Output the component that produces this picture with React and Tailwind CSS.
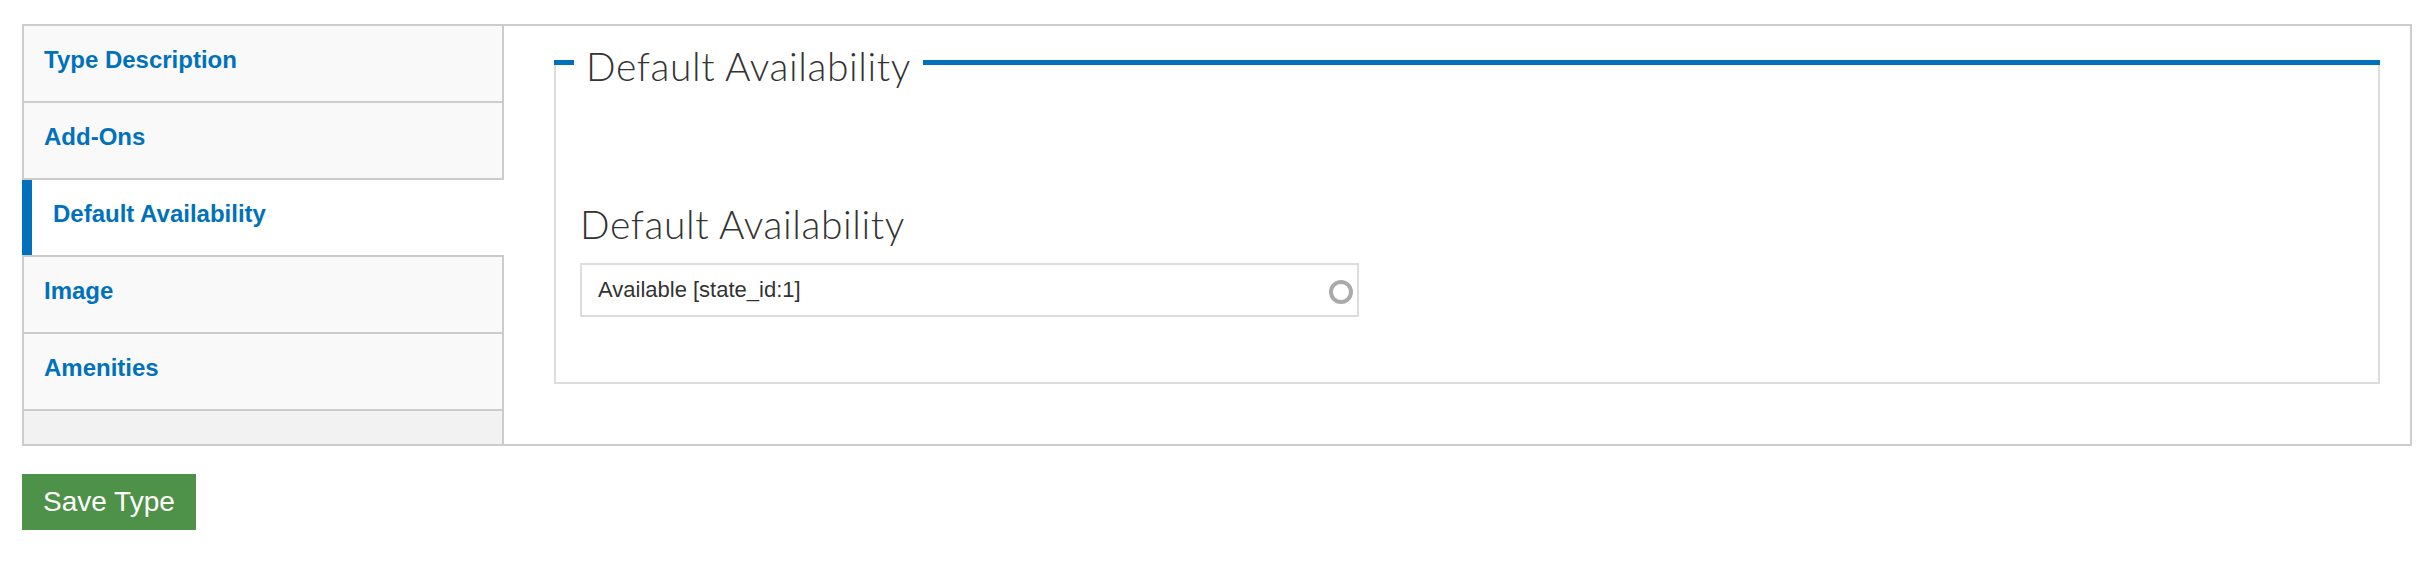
const tabs = [
  { label: "Type Description" },
  { label: "Add-Ons" },
  { label: "Default Availability", active: true },
  { label: "Image" },
  { label: "Amenities" },
];

export default function App() {
  return (
    <div className="min-h-screen bg-white pl-[22px] pr-[24px] pt-[24px] font-['Liberation_Sans',Arial,sans-serif]">
      <div className="flex border-2 border-[#ccc]">
        {/* Sidebar tabs */}
        <div className="w-[480px] shrink-0 flex flex-col">
          {tabs.map((tab) =>
            tab.active ? (
              <div key={tab.label} className="h-[77px] -ml-[2px] flex border-b-2 border-[#ccc]">
                <div className="w-[10px] bg-[#0271bb]" />
                <div className="flex-1 flex items-center bg-white pl-[21px] pb-[7px] text-[24px] font-bold text-[#0271bb]">
                  {tab.label}
                </div>
              </div>
            ) : (
              <div
                key={tab.label}
                className="h-[77px] flex items-center bg-[#f9f9f9] border-b-2 border-r-2 border-[#ccc] pl-[20px] pb-[7px] text-[24px] font-bold text-[#0271bb]"
              >
                {tab.label}
              </div>
            )
          )}
          <div className="flex-1 bg-[#f2f2f2] border-r-2 border-[#ccc]" />
        </div>

        {/* Content */}
        <div className="flex-1 pl-[50px] pr-[30px] pt-[34px] pb-[60px]">
          <div className="flex items-center h-[5px]">
            <div className="w-[20px] h-[5px] bg-[#0271bb]" />
            <span className="px-[12px] pt-[6px] leading-[0] text-[39px] tracking-[0.6px] font-light text-[#333] font-['Lato',sans-serif] whitespace-nowrap">
              Default Availability
            </span>
            <div className="flex-1 h-[5px] bg-[#0271bb]" />
          </div>
          <div className="border-x-2 border-b-2 border-[#ddd] pl-[24px] pt-[136px] pb-[65px]">
            <h2 className="text-[39px] leading-[1.2] tracking-[0.6px] font-light text-[#333] font-['Lato',sans-serif]">
              Default Availability
            </h2>
            <div className="mt-[15px] w-[779px] h-[54px] border-2 border-[#ddd] flex items-center justify-between pl-[16px] pr-[4px]">
              <span className="text-[22px] text-[#333]">Available [state_id:1]</span>
              <span className="w-[24px] h-[24px] mt-[4px] rounded-full border-[4px] border-[#aaa] blur-[0.5px]" />
            </div>
          </div>
        </div>
      </div>

      <button className="mt-[28px] h-[56px] px-[21px] bg-[#4e9148] text-white text-[28px]">
        Save Type
      </button>
    </div>
  );
}
